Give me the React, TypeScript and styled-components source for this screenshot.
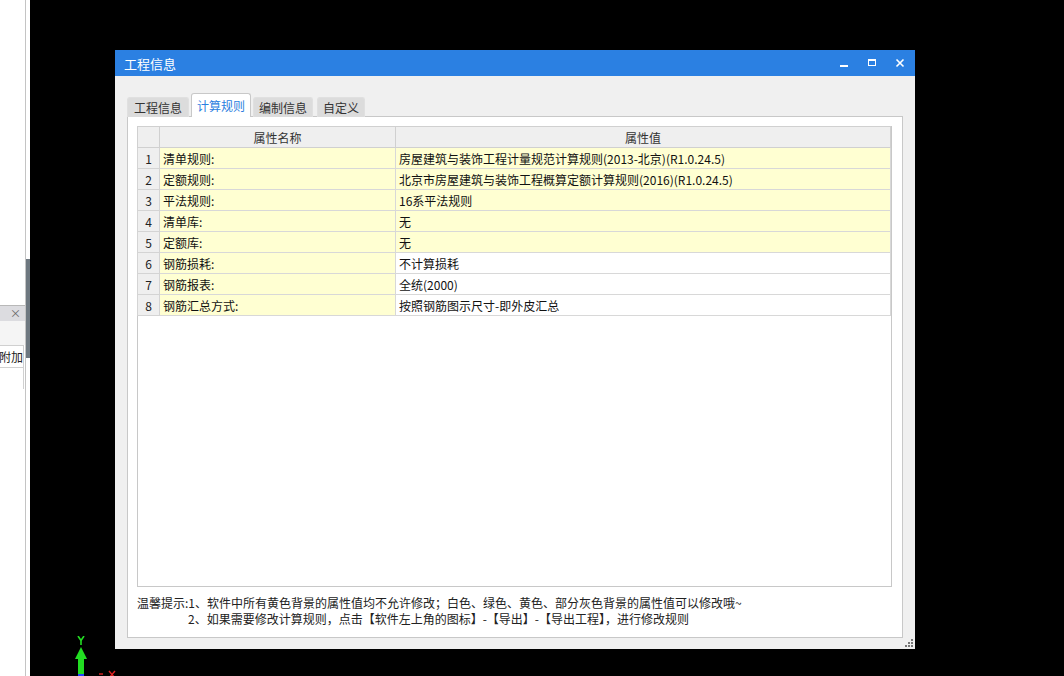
import React from "react"
import styled, {createGlobalStyle} from "styled-components"

const GlobalStyle = createGlobalStyle`
  html, body {
    margin: 0;
    padding: 0;
    background: #000;
  }
  body {
    font-family: "Noto Sans CJK SC", "Noto Sans", "Liberation Sans", sans-serif;
    font-size: 12px;
  }
`

type RuleRow = { name: string, value: string, locked: boolean }

const rows: RuleRow[] = [
    {name: "清单规则:", value: "房屋建筑与装饰工程计量规范计算规则(2013-北京)(R1.0.24.5)", locked: true},
    {name: "定额规则:", value: "北京市房屋建筑与装饰工程概算定额计算规则(2016)(R1.0.24.5)", locked: true},
    {name: "平法规则:", value: "16系平法规则", locked: true},
    {name: "清单库:", value: "无", locked: true},
    {name: "定额库:", value: "无", locked: true},
    {name: "钢筋损耗:", value: "不计算损耗", locked: false},
    {name: "钢筋报表:", value: "全统(2000)", locked: false},
    {name: "钢筋汇总方式:", value: "按照钢筋图示尺寸-即外皮汇总", locked: false},
]

const tabs = ["工程信息", "计算规则", "编制信息", "自定义"]

export default function App() {
    return (
        <Page>
            <GlobalStyle/>
            <SidePanel>
                <SideHeader>
                    <span>×</span>
                </SideHeader>
                <SideBlank/>
                <SideCell>附加</SideCell>
                <SideCell/>
            </SidePanel>
            <Splitter>
                <SplitHandle/>
            </Splitter>
            <Canvas>
                <Dialog>
                    <TitleBar>
                        <span>工程信息</span>
                        <TitleButtons>
                            <svg width="10" height="10" viewBox="0 0 10 10">
                                <rect x="1" y="7" width="8" height="2" fill="#fff"/>
                            </svg>
                            <svg width="10" height="10" viewBox="0 0 10 10">
                                <rect x="1.5" y="1.5" width="7" height="6" fill="none" stroke="#fff"/>
                                <rect x="1" y="1" width="8" height="2" fill="#fff"/>
                            </svg>
                            <svg width="10" height="10" viewBox="0 0 10 10">
                                <path d="M1.5 1.5 L8.5 8.5 M8.5 1.5 L1.5 8.5" stroke="#fff" strokeWidth="1.6"/>
                            </svg>
                        </TitleButtons>
                    </TitleBar>
                    <DialogBody>
                        <TabRow>
                            {tabs.map((t, i) => <Tab key={t} $active={i === 1}>{t}</Tab>)}
                        </TabRow>
                        <TabPanel>
                            <GridBox>
                                <Grid>
                                    <colgroup>
                                        <col style={{width: 22}}/>
                                        <col style={{width: 236}}/>
                                        <col/>
                                    </colgroup>
                                    <thead>
                                    <tr>
                                        <HeadCell/>
                                        <HeadCell>属性名称</HeadCell>
                                        <HeadCell>属性值</HeadCell>
                                    </tr>
                                    </thead>
                                    <tbody>
                                    {rows.map((r, i) => (
                                        <tr key={r.name}>
                                            <NumCell>{i + 1}</NumCell>
                                            <Cell $bg="#ffffd2">{r.name}</Cell>
                                            <Cell $bg={r.locked ? "#ffffd2" : "#fff"}>{r.value}</Cell>
                                        </tr>
                                    ))}
                                    </tbody>
                                </Grid>
                            </GridBox>
                            <Notes>
                                <div>温馨提示:1、软件中所有黄色背景的属性值均不允许修改；白色、绿色、黄色、部分灰色背景的属性值可以修改哦~</div>
                                <NoteIndent>2、如果需要修改计算规则，点击【软件左上角的图标】-【导出】-【导出工程】，进行修改规则</NoteIndent>
                            </Notes>
                        </TabPanel>
                        <Grip>
                            <svg width="8" height="8" viewBox="0 0 8 8">
                                <rect x="6" y="0" width="2" height="2" fill="#777"/>
                                <rect x="3" y="3" width="2" height="2" fill="#777"/>
                                <rect x="6" y="3" width="2" height="2" fill="#777"/>
                                <rect x="0" y="6" width="2" height="2" fill="#777"/>
                                <rect x="3" y="6" width="2" height="2" fill="#777"/>
                                <rect x="6" y="6" width="2" height="2" fill="#777"/>
                            </svg>
                        </Grip>
                    </DialogBody>
                </Dialog>
                <Axis>
                    <svg width="60" height="40" viewBox="0 0 60 40">
                        <path d="M5 0 L8 4.5 L11 0 M8 4.5 L8 9" stroke="#22dd22" strokeWidth="1.6" fill="none"/>
                        <polygon points="8,11 14,23 2,23" fill="#22dd22"/>
                        <rect x="5" y="23" width="6" height="17" fill="#22dd22"/>
                        <rect x="5" y="38" width="6" height="2" fill="#2244ff"/>
                        <path d="M26 38 L30 38" stroke="#dd2222" strokeWidth="1.4"/>
                        <path d="M36 35 L42 42 M42 35 L36 42" stroke="#dd2222" strokeWidth="1.4"/>
                    </svg>
                </Axis>
            </Canvas>
        </Page>
    )
}

const Page = styled.div`
  display: flex;
  width: 1064px;
  height: 676px;
  overflow: hidden;
  background: #000;
`

//Left docked panel
const SidePanel = styled.div`
  width: 25px;
  background: #fff;
  border-right: 1px solid #c4c4c4;
  display: flex;
  flex-direction: column;
  padding-top: 305px;
  overflow: hidden;
`
const SideHeader = styled.div`
  height: 15px;
  background: #dcdce0;
  border-top: 1px solid #b8b8b8;
  display: flex;
  justify-content: flex-end;
  align-items: center;
  padding-right: 4px;
  color: #666;
  font-size: 11px;
  line-height: 1;
`
const SideBlank = styled.div`
  height: 24px;
  background: #f5f5f5;
`
const SideCell = styled.div`
  height: 21px;
  border-top: 1px solid #d0d0d0;
  border-right: 1px solid #d0d0d0;
  width: 23px;
  font-size: 12px;
  line-height: 21px;
  white-space: nowrap;
  direction: rtl;
  color: #222;
`
const Splitter = styled.div`
  width: 4px;
  background: #fff;
  flex-shrink: 0;
`
const SplitHandle = styled.div`
  margin-top: 259px;
  height: 99px;
  background: #6e7880;
`

//Canvas with dialog
const Canvas = styled.div`
  position: relative;
  flex: 1;
  background: #000;
`
const Dialog = styled.div`
  position: absolute;
  left: 85px;
  top: 50px;
  width: 800px;
  height: 599px;
  background: #f0f0f0;
  display: flex;
  flex-direction: column;
`
const TitleBar = styled.div`
  height: 26px;
  background: #2b80e2;
  color: #fff;
  font-size: 13px;
  display: flex;
  align-items: center;
  justify-content: space-between;
  padding: 0 9px;
`
const TitleButtons = styled.div`
  display: flex;
  gap: 18px;
  padding-right: 1px;
`
const DialogBody = styled.div`
  position: relative;
  flex: 1;
  display: flex;
  flex-direction: column;
  padding: 17px 12px 11px 12px;
`
const TabRow = styled.div`
  display: flex;
  align-items: flex-end;
  gap: 2px;
  margin-bottom: -1px;
  position: relative;
  z-index: 1;
`
const Tab = styled.div<{ $active: boolean }>`
  height: ${p => p.$active ? 24 : 20}px;
  line-height: ${p => p.$active ? 23 : 20}px;
  padding: 0 ${p => p.$active ? 5 : 6}px;
  border: 1px solid ${p => p.$active ? "#c8c8c8" : "#e0e0e0"};
  border-bottom: none;
  border-radius: 3px 3px 0 0;
  background: ${p => p.$active ? "#fff" : "#dcdcdc"};
  color: ${p => p.$active ? "#2a7ee0" : "#333"};
  font-size: 12px;
  box-sizing: border-box;
  &:nth-child(3) {
    padding: 0 5px;
  }
  &:last-child {
    margin-left: 2px;
    padding: 0 5px;
  }
`
const TabPanel = styled.div`
  flex: 1;
  background: #fff;
  border: 1px solid #c8c8c8;
  padding: 9px 10px 0 9px;
  display: flex;
  flex-direction: column;
`
const GridBox = styled.div`
  height: 461px;
  border: 1px solid #c8c8c8;
  box-sizing: border-box;
  background: #fff;
`
const Grid = styled.table`
  border-collapse: collapse;
  table-layout: fixed;
  margin: -1px 0 0 -1px;
  width: calc(100% + 1px);
`
const HeadCell = styled.th`
  height: 20px;
  padding: 0;
  background: #efefef;
  border: 1px solid #d0d0d0;
  font-weight: normal;
  font-size: 12px;
  color: #333;
  text-align: center;
`
const NumCell = styled.td`
  height: 20px;
  padding: 0;
  background: #efefef;
  border: 1px solid #d4d4d4;
  text-align: center;
  color: #222;
`
const Cell = styled.td<{ $bg: string }>`
  height: 20px;
  padding: 0 3px;
  background: ${p => p.$bg};
  border: 1px solid #d8d8d8;
  color: #111;
  white-space: nowrap;
  overflow: hidden;
`
const Notes = styled.div`
  padding-top: 8px;
  line-height: 16px;
  font-size: 12px;
  color: #222;
  white-space: nowrap;
`
const NoteIndent = styled.div`
  padding-left: 51px;
`
const Grip = styled.div`
  position: absolute;
  right: 2px;
  bottom: 2px;
  line-height: 0;
`

//Coordinate axis in the viewport
const Axis = styled.div`
  position: absolute;
  left: 43px;
  top: 636px;
  line-height: 0;
`
